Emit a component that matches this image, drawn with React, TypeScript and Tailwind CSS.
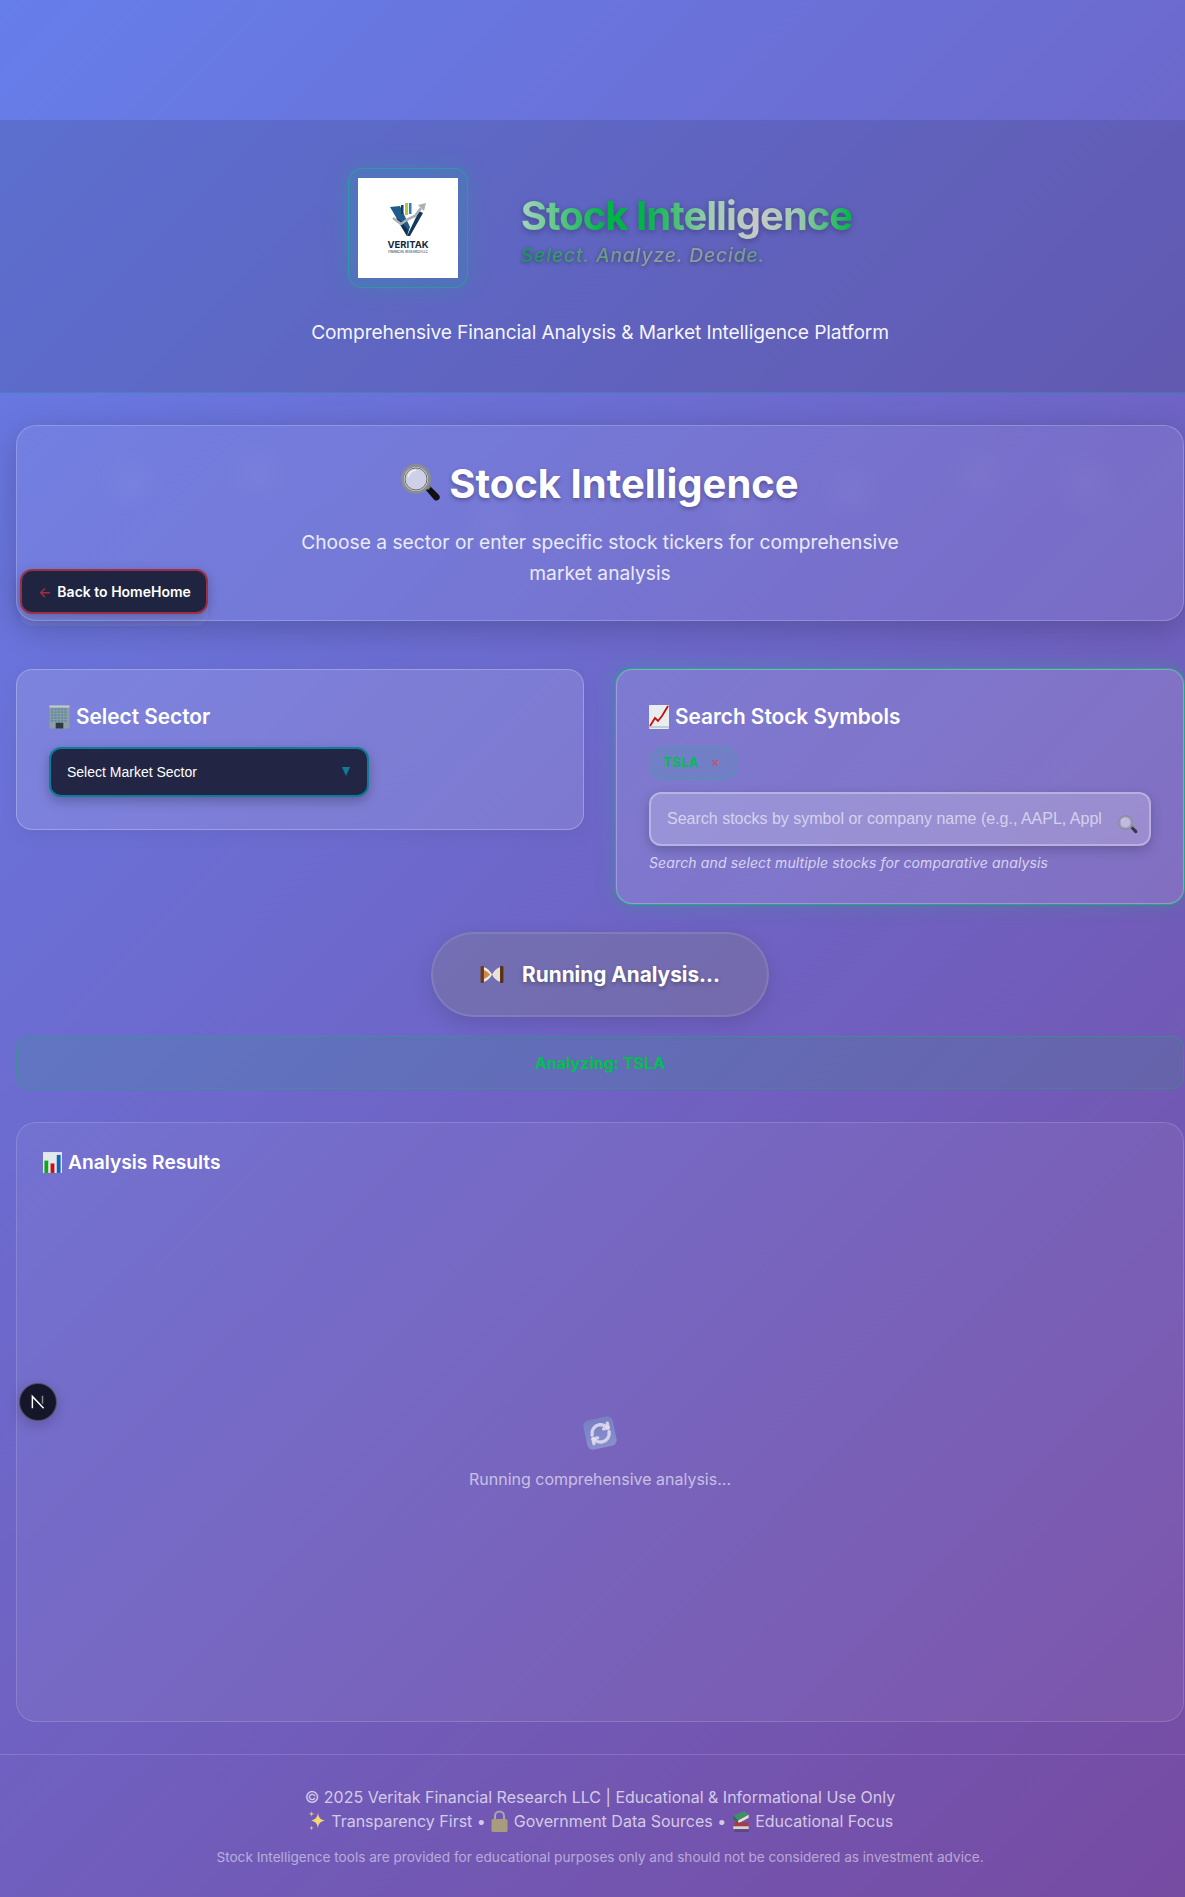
import React from 'react';
import { RefreshCw } from 'lucide-react';

const MagnifierIcon = ({ className }: { className: string }) => (
  <svg viewBox="0 0 40 40" className={className}>
    <path d="M24 25l4-4 10 10c1.200 1.500 1 3-.2 4.500-1.500 1.300-3.300 1.400-4.600.2z" fill="#111" />
    <path d="M24 23l3-3 3 3-3 3z" fill="#777" />
    <circle cx="15" cy="15" r="13.500" fill="#d6d6ea" stroke="#8a8f8c" strokeWidth="3" />
    <circle cx="15" cy="15" r="11" fill="#cfcfe8" stroke="#4c5150" strokeWidth="0.800" />
    <path d="M7 13c1-4 4-6.500 8-7" stroke="#fff" strokeWidth="1.500" fill="none" opacity="0.700" />
  </svg>
);

const BuildingIcon = () => (
  <svg viewBox="0 0 22 24" className="w-[21px] h-[24px] shrink-0">
    <rect x="0.500" y="0" width="21" height="24" fill="#8f9ea6" />
    <rect x="0.500" y="0" width="21" height="2" fill="#c7cdcf" />
    {[3, 6, 9, 12, 15].map((y) => (
      <g key={y}>
        {[2, 5.500, 9, 12.500, 16].map((x) => (
          <rect key={x} x={x} y={y} width="2.500" height="2" fill="#5f8fa5" />
        ))}
      </g>
    ))}
    <rect x="7" y="18" width="8" height="6" fill="#2e3a42" />
  </svg>
);

const ChartUpIcon = () => (
  <svg viewBox="0 0 20 24" className="w-[20px] h-[24px] shrink-0">
    <rect width="20" height="24" rx="1" fill="#e9edf0" />
    <path d="M1 21l5-8 3 3 4-5 6-10" fill="none" stroke="#c80d0d" strokeWidth="1.800" />
    <path d="M0 22h20" stroke="#9fa9b0" strokeWidth="1" />
  </svg>
);

const HourglassIcon = () => (
  <svg viewBox="0 0 24 20" className="w-[24px] h-[19px] shrink-0">
    <path d="M3 2c4 1 7 4 9 8-2 4-5 7-9 8z" fill="#f1ece4" />
    <path d="M21 2c-4 1-7 4-9 8 2 4 5 7 9 8z" fill="#e5e2dc" />
    <path d="M3 5c3 1 5 3 7 5-2 2-4 4-7 5z" fill="#c98c4e" />
    <rect x="0" y="1" width="3.500" height="18" rx="1" fill="#6e3a14" />
    <rect x="20.500" y="1" width="3.500" height="18" rx="1" fill="#5b2f10" />
  </svg>
);

const BarChartIcon = () => (
  <svg viewBox="0 0 20 22" className="w-[19px] h-[21px] shrink-0">
    <rect width="20" height="22" fill="#e3e8ec" />
    <rect x="1.500" y="9" width="4" height="13" fill="#12a51a" />
    <rect x="8" y="12" width="4" height="10" fill="#c8100f" />
    <rect x="14.500" y="3" width="4" height="19" fill="#1262c4" />
  </svg>
);

const SparklesIcon = () => (
  <svg viewBox="0 0 20 24" className="inline-block w-[20px] h-[22px] align-[-5px]">
    <path d="M11 3c.7 5 2 7 7.500 8.500-5.500 1.500-6.800 3.500-7.500 8.500-.7-5-2-7-7.500-8.500C9 10 10.300 8 11 3z" fill="#f6d774" />
    <path d="M4 1c.3 2 .8 2.700 3 3.200-2.200.5-2.700 1.300-3 3.300-.3-2-.8-2.800-3-3.300C3.200 3.700 3.700 3 4 1z" fill="#f2c14e" />
    <path d="M4 17c.2 1.700.7 2.300 2.500 2.700-1.800.4-2.300 1-2.500 2.800-.2-1.800-.7-2.400-2.500-2.800 1.800-.4 2.300-1 2.500-2.700z" fill="#f2c14e" />
  </svg>
);

const LockIcon = () => (
  <svg viewBox="0 0 18 24" className="inline-block w-[19px] h-[24px] align-[-6px]">
    <path d="M4.500 11V7a4.500 4.500 0 019 0v4" fill="none" stroke="#a7a9ab" strokeWidth="2" />
    <rect x="1" y="10" width="16" height="13" rx="1.500" fill="#a99b7e" />
  </svg>
);

const BooksIcon = () => (
  <svg viewBox="0 0 20 24" className="inline-block w-[20px] h-[23px] align-[-6px]">
    <path d="M2 6l11-5 5 4-11 6z" fill="#3f8f68" />
    <path d="M2 6l5 5v3L2 9z" fill="#2d6b4e" />
    <path d="M7 11l11-6v3L7 14z" fill="#e8e3d5" />
    <rect x="3" y="13" width="15" height="4" fill="#a83a44" />
    <rect x="2" y="17" width="16" height="3" fill="#d7d3c8" />
    <rect x="3" y="20" width="15" height="3" fill="#5a4a82" />
  </svg>
);

const VeritakLogo = () => (
  <svg viewBox="0 0 100 100" className="w-[100px] h-[100px] block">
    <rect width="100" height="100" fill="#fff" />
    <path d="M32 29l10-1 10 21-3 9z" fill="#1f5c8c" />
    <path d="M38 40l5 3 7 9-1 6z" fill="#12304d" />
    <rect x="43" y="27" width="2.500" height="9" fill="#17405f" />
    <rect x="47" y="25" width="3" height="12" fill="#a8cf3b" />
    <rect x="51" y="25" width="2.500" height="11" fill="#2f7fb0" />
    <path d="M49 58l12-25 4 2-13 23z" fill="#14385c" />
    <path d="M35 40l8 6 7-5 7-3 6-8" fill="none" stroke="#a9b0b6" strokeWidth="2.500" />
    <path d="M68 25l-8 2 6 6z" fill="#a9b0b6" />
    <text x="50" y="70" textAnchor="middle" fontFamily="Inter, sans-serif" fontWeight="700" fontSize="9.500" fill="#14283f">VERITAK</text>
    <text x="50" y="74.500" textAnchor="middle" fontFamily="Inter, sans-serif" fontWeight="600" fontSize="3" fill="#4a5560">FINANCIAL RESEARCH LLC</text>
  </svg>
);

const spots = [
  { x: 130, y: 482 },
  { x: 255, y: 472 },
  { x: 493, y: 522 },
  { x: 739, y: 512 },
  { x: 850, y: 490 },
  { x: 978, y: 472 },
  { x: 1085, y: 482 },
];

export default function App() {
  return (
    <div className="relative w-full min-h-screen h-[1897px] overflow-hidden bg-[linear-gradient(135deg,#667eea_0%,#764ba2_100%)] font-['Inter',sans-serif] text-white">
      <div className="w-[1200px]">
        {/* Page header */}
        <div className="h-[120px]" />
        <header className="h-[273px] bg-black/10 border-b border-b-[rgba(0,200,150,0.3)] flex flex-col items-center pt-[48px]">
          <div className="flex items-center gap-[53px] h-[120px]">
            <div className="w-[120px] h-[120px] p-[9px] rounded-[14px] border border-[rgba(0,200,130,0.45)] bg-[rgba(0,200,130,0.12)] shadow-[0_0_24px_rgba(0,200,130,0.18)] flex items-center justify-center">
              <VeritakLogo />
            </div>
            <div className="mt-[3px]">
              <div className="text-[40px] leading-[48px] font-bold tracking-[-1px] whitespace-nowrap bg-[linear-gradient(90deg,#a6d5bd_0%,#00b548_25%,#00b548_38%,#a4cdb6_58%,#c8c8c8_72%,#9cc9b0_84%,#00b548_100%)] bg-clip-text text-transparent [filter:drop-shadow(0_2px_3px_rgba(0,0,0,0.3))]">
                Stock Intelligence
              </div>
              <div className="text-[19.2px] leading-[24px] mt-[3px] italic font-medium tracking-[0.9px] whitespace-nowrap bg-[linear-gradient(90deg,#109a55_0%,#8d9d9c_35%,#8d9d9c_60%,#3f9a78_85%,#0e9a58_100%)] bg-clip-text text-transparent [filter:drop-shadow(0_1px_2px_rgba(0,0,0,0.4))]">
                Select. Analyze. Decide.
              </div>
            </div>
          </div>
          <p className="mt-[30px] text-[19.2px] leading-[28px] tracking-[-0.14px] text-white/95">
            Comprehensive Financial Analysis &amp; Market Intelligence Platform
          </p>
        </header>

        <main className="px-4 pt-[32px]">
          {/* Hero */}
          <section className="relative h-[196px] rounded-[20px] border border-white/20 bg-white/[0.07] shadow-[0_8px_32px_rgba(0,0,0,0.2)] flex flex-col items-center pt-[34px]">
            {spots.map((s) => (
              <span
                key={s.x}
                className="absolute w-[70px] h-[70px] rounded-full bg-[radial-gradient(circle,rgba(255,255,255,0.03),rgba(255,255,255,0)_70%)]"
                style={{ left: s.x - 51, top: s.y - 460 }}
              />
            ))}
            <h1 className="flex items-center gap-[8px] text-[40px] leading-[48px] font-bold [text-shadow:0_2px_4px_rgba(0,0,0,0.3)]">
              <MagnifierIcon className="w-[40px] h-[40px] shrink-0" />
              Stock Intelligence
            </h1>
            <p className="mt-[19px] w-[620px] text-center text-[19.2px] leading-[31px] text-white/85">
              Choose a sector or enter specific stock tickers for comprehensive market analysis
            </p>
            <a className="absolute left-[3px] top-[143px] w-[188px] h-[57px] rounded-[12px] bg-white/[0.06]">
              <span className="flex items-center w-[188px] h-[45px] rounded-[12px] border-2 border-[#9b2f45] bg-[#1f2540] pl-[16px] text-[14px] font-semibold shadow-[0_4px_12px_rgba(0,0,0,0.25)]">
                <span className="text-[#a02c44] text-[14px] mr-[6px]">←</span>
                Back to HomeHome
              </span>
            </a>
          </section>

          {/* Pickers */}
          <div className="mt-[48px] grid grid-cols-2 gap-[32px] items-start">
            <section className="h-[161px] rounded-[16px] border border-white/25 bg-white/[0.12] p-[32px] pt-[30px] shadow-[0_4px_20px_rgba(0,0,0,0.05)]">
              <h2 className="flex items-center gap-[6px] text-[20.800px] leading-[34px] font-semibold">
                <BuildingIcon />
                Select Sector
              </h2>
              <div className="relative mt-[13px] w-[320px] h-[50px] rounded-[12px] border-2 border-[#0e7c96] bg-[#222644] shadow-[0_4px_12px_rgba(0,0,0,0.25)] flex items-center pl-[16px] text-[14px] font-['Liberation_Sans',sans-serif]">
                Select Market Sector
                <span className="absolute right-[17px] top-[18px] w-0 h-0 border-x-[4.500px] border-x-transparent border-t-[9px] border-t-[#0e7c96]" />
              </div>
            </section>

            <section className="h-[235px] rounded-[16px] border border-white/25 bg-white/[0.12] px-[32px] pt-[30px] shadow-[0_0_0_1px_rgba(0,200,100,0.7),0_0_20px_rgba(0,200,100,0.25)]">
              <h2 className="flex items-center gap-[6px] text-[20.800px] leading-[34px] font-semibold">
                <ChartUpIcon />
                Search Stock Symbols
              </h2>
              <div className="mt-[13px] flex items-center w-[89px] h-[33px] rounded-full border border-[rgba(0,200,130,0.35)] bg-[rgba(0,200,130,0.1)] pl-[13px] text-[14px] tracking-[0.3px] font-['Liberation_Mono',monospace] font-bold text-[#00c04f]">
                TSLA
                <span className="ml-[14px] text-[#c8506a] text-[12px] font-bold">×</span>
              </div>
              <div className="relative mt-[12px] h-[54px] rounded-[12px] border-2 border-white/30 bg-white/20 shadow-[0_4px_12px_rgba(0,0,0,0.2)] flex items-center pl-[16px] pb-[1px]">
                <span className="block w-[434px] overflow-hidden whitespace-nowrap text-[16px] text-white/60 font-['Liberation_Sans',sans-serif]">
                  Search stocks by symbol or company name (e.g., AAPL, Apple)
                </span>
                <span className="absolute right-[11px] top-[21px] opacity-70">
                  <MagnifierIcon className="w-[20px] h-[20px]" />
                </span>
              </div>
              <p className="mt-[7px] text-[14px] leading-[20px] tracking-[0.13px] italic text-white/70">
                Search and select multiple stocks for comparative analysis
              </p>
            </section>
          </div>

          {/* Run button */}
          <div className="mt-[28px] flex justify-center">
            <button className="flex items-center gap-[18px] justify-center w-[338px] h-[85px] rounded-full border-2 border-white/10 bg-[rgba(128,128,128,0.3)] text-[20.800px] font-bold shadow-[0_6px_20px_rgba(0,0,0,0.12)] [text-shadow:0_2px_4px_rgba(0,0,0,0.3)]">
              <HourglassIcon />
              Running Analysis...
            </button>
          </div>

          {/* Status */}
          <div className="mt-[19px] h-[53px] rounded-[12px] border border-[rgba(0,200,83,0.3)] bg-[rgba(0,200,83,0.1)] flex items-center justify-center text-[16px] font-bold text-[#00c04f]">
            Analyzing: TSLA
          </div>

          {/* Results */}
          <section className="mt-[33px] h-[600px] rounded-[20px] border border-white/15 bg-white/[0.05] p-[24px] flex flex-col">
            <h3 className="flex items-center gap-[6px] pl-[2px] text-[19.200px] leading-[30px] font-semibold">
              <BarChartIcon />
              Analysis Results
            </h3>
            <div className="flex-1 flex flex-col items-center justify-center pt-[34px]">
              <div className="w-[30px] h-[30px] rounded-[6px] -rotate-[12deg] bg-[linear-gradient(180deg,#7787c4,#8f9ad2)] opacity-80 flex items-center justify-center">
                <RefreshCw size={23} strokeWidth={3.500} className="text-white/85" />
              </div>
              <p className="mt-[19px] text-[16px] leading-[24px] text-white/60">
                Running comprehensive analysis...
              </p>
            </div>
          </section>
        </main>

        <footer className="mt-[32px] border-t border-white/15 pt-[30px] text-center">
          <p className="text-[16px] leading-[24px] text-white/70">
            © 2025 Veritak Financial Research LLC | Educational &amp; Informational Use Only
          </p>
          <p className="text-[16px] leading-[24px] text-white/70">
            <SparklesIcon /> Transparency First • <LockIcon /> Government Data Sources • <BooksIcon /> Educational Focus
          </p>
          <p className="mt-[14px] text-[13.600px] leading-[20px] text-white/50">
            Stock Intelligence tools are provided for educational purposes only and should not be considered as investment advice.
          </p>
        </footer>
      </div>

      {/* Next dev indicator */}
      <div className="absolute left-[19px] top-[1383px] w-[38px] h-[38px] rounded-full bg-[#16162a] border border-white/25 shadow-[0_4px_14px_rgba(0,0,0,0.2)] flex items-center justify-center">
        <svg viewBox="0 0 16 16" className="w-[18px] h-[18px]">
          <path d="M3 13.500V3l10 10.500" fill="none" stroke="#fff" strokeWidth="1.300" />
          <path d="M12 2.500v7" stroke="#fff" strokeWidth="1.300" opacity="0.500" />
        </svg>
      </div>
    </div>
  );
}
